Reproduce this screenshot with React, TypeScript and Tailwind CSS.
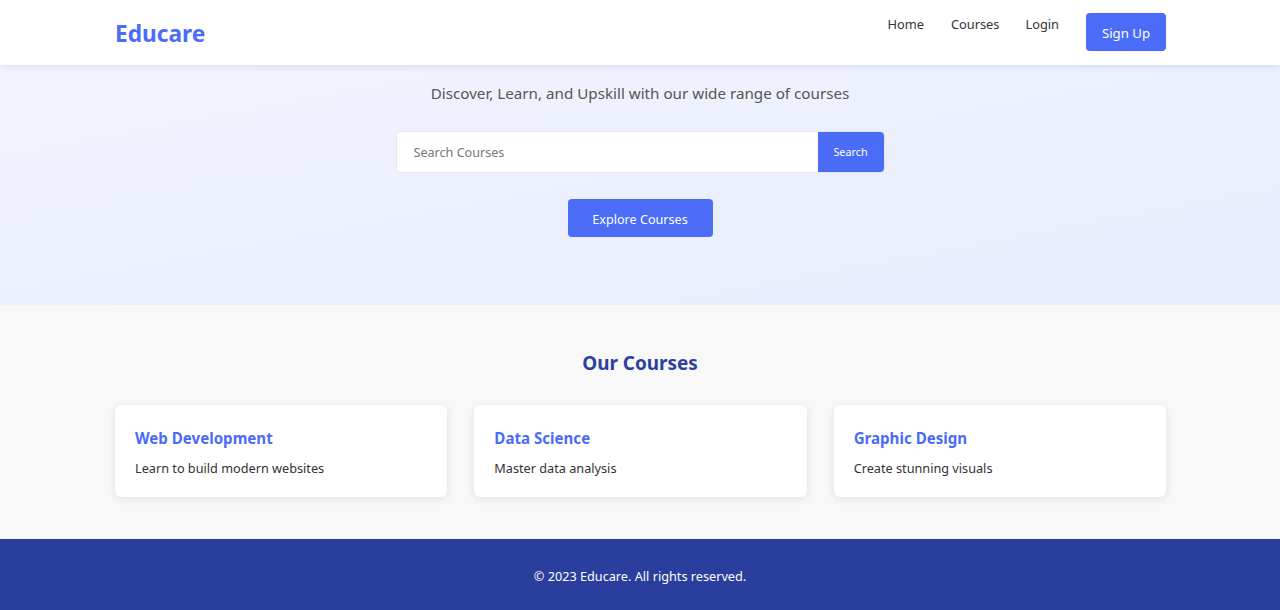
import React from "react";

const courses = [
  { title: "Web Development", desc: "Learn to build modern websites" },
  { title: "Data Science", desc: "Master data analysis" },
  { title: "Graphic Design", desc: "Create stunning visuals" },
];

export default function App() {
  return (
    <div className="min-h-[610px] flex flex-col font-['Noto_Sans',sans-serif] text-[#333]">
      <header className="h-[65px] bg-white shadow-[0_2px_6px_rgba(0,0,0,0.08)] relative z-10">
        <div className="ml-[115px] w-[1051px] h-full flex items-center justify-between">
          <div className="text-[22.7px] font-bold text-[#4a6cf7] leading-none mt-[3px]">Educare</div>
          <nav className="flex items-start text-[12.8px] text-[#333] h-full pt-[13px]">
            <a className="mr-[27px] mt-[2px]">Home</a>
            <a className="mr-[26px] mt-[2px]">Courses</a>
            <a className="mr-[27px] mt-[2px]">Login</a>
            <button className="w-[80px] h-[38px] bg-[#4a6cf7] text-white rounded-[4px] text-[13.2px] pt-[3px]">Sign Up</button>
          </nav>
        </div>
      </header>
      <section className="h-[240px] bg-gradient-to-br from-[#f1f4fe] to-[#e8ecfd] flex flex-col items-center">
        <p className="mt-[17px] text-[15.2px] text-[#555]">Discover, Learn, and Upskill with our wide range of courses</p>
        <div className="mt-[27px] flex w-[487px] h-[40px] shadow-[0_0_0_1px_#e3e6ee] rounded-[4px]">
          <input className="flex-1 bg-white rounded-l-[4px] px-[17px] pt-[4px] text-[12.6px] outline-none placeholder:text-[#777]" placeholder="Search Courses" />
          <button className="w-[66px] bg-[#4a6cf7] text-white text-[10.8px] rounded-r-[4px]">Search</button>
        </div>
        <button className="mt-[27px] w-[145px] h-[38px] bg-[#4a6cf7] text-white text-[12.6px] rounded-[4px] pt-[5px]">Explore Courses</button>
      </section>
      <section className="h-[234px] bg-[#f8f8f8]">
        <h2 className="mt-[44px] text-center text-[18.9px] font-bold text-[#2b3f9e]">Our Courses</h2>
        <div className="ml-[115px] w-[1051px] mt-[28px] grid grid-cols-3 gap-[27px]">
          {courses.map((c) => (
            <div key={c.title} className="h-[92px] bg-white rounded-[6px] shadow-[0_2px_8px_rgba(0,0,0,0.1)] px-[20px] pt-[22px]">
              <h3 className="text-[15.1px] font-bold text-[#4a6cf7] leading-[22px]">{c.title}</h3>
              <p className="mt-[9px] text-[12.7px] text-[#333] leading-[20px]">{c.desc}</p>
            </div>
          ))}
        </div>
      </section>
      <footer className="h-[71px] bg-[#2a3e9e] flex items-center justify-center text-white text-[12.7px] pt-[4px]">
        © 2023 Educare. All rights reserved.
      </footer>
    </div>
  );
}
